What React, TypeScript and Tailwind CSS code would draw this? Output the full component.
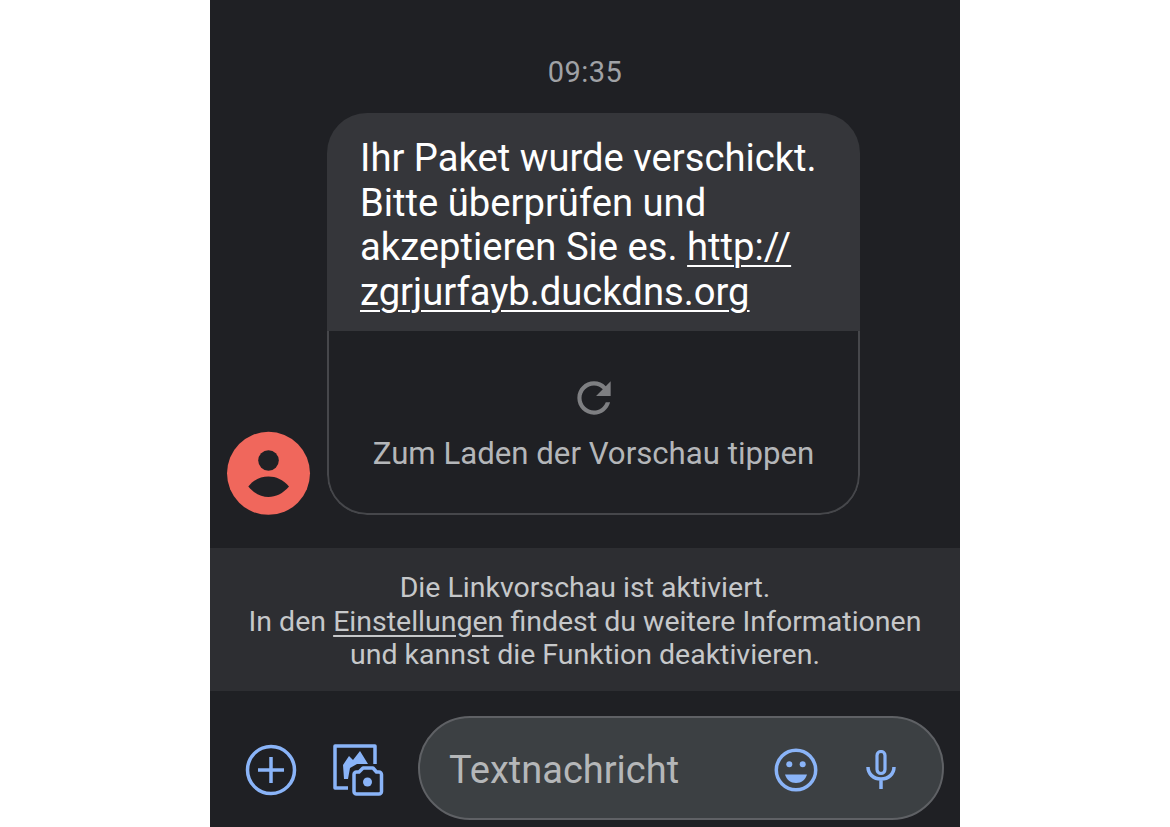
const BLUE = '#8ab4f8'

function PlusIcon() {
  return (
    <svg width="52" height="52" viewBox="0 0 52 52" fill="none" stroke={BLUE} strokeWidth="3.500">
      <circle cx="26" cy="26" r="23.500" />
      <path d="M26 13v26M13 26h26" />
    </svg>
  )
}

function GalleryIcon() {
  return (
    <svg width="52" height="52" viewBox="0 0 52 52" fill="none">
      <path d="M15 44H2V2h40v18" stroke={BLUE} strokeWidth="3.500" strokeLinejoin="round" />
      <path d="M11 35l-1-14 6-9 4 4 7-9 8 13H24l-7 4-2 11z" fill={BLUE} />
      <path d="M21 30.500a2.500 2.500 0 0 1 2.500-2.500H26l4-4h10l3.500 4H46a2.500 2.500 0 0 1 2.500 2.500V47.500a2.500 2.500 0 0 1-2.500 2.500H23.500a2.500 2.500 0 0 1-2.500-2.500z" stroke={BLUE} strokeWidth="3.500" strokeLinejoin="round" />
      <circle cx="34.500" cy="38" r="4.500" fill={BLUE} />
    </svg>
  )
}

function SmileIcon() {
  return (
    <svg width="44" height="44" viewBox="0 0 44 44" fill="none">
      <circle cx="22" cy="22" r="19.700" stroke={BLUE} strokeWidth="3.500" />
      <circle cx="15.300" cy="16.300" r="3" fill={BLUE} />
      <circle cx="28.700" cy="16.300" r="3" fill={BLUE} />
      <path d="M11 26.500h22c-1.500 5-5.500 8.500-11 8.500s-9.500-3.500-11-8.500z" fill={BLUE} />
    </svg>
  )
}

function MicIcon() {
  return (
    <svg width="30" height="40" viewBox="0 0 30 40" fill="none">
      <rect x="11" y="1.500" width="8" height="22" rx="4" stroke={BLUE} strokeWidth="3.200" />
      <path d="M2 17c0 7 5.500 12 13 12s13-5 13-12M15 29v10" stroke={BLUE} strokeWidth="3.500" />
    </svg>
  )
}

function RefreshIcon() {
  return (
    <svg width="50" height="50" viewBox="0 0 24 24" fill="#7e7f82">
      <path d="M17.650 6.350C16.200 4.900 14.210 4 12 4c-4.420 0-7.990 3.580-7.990 8s3.570 8 7.990 8c3.730 0 6.840-2.550 7.730-6h-2.080c-.82 2.330-3.040 4-5.650 4-3.310 0-6-2.690-6-6s2.690-6 6-6c1.660 0 3.140.69 4.220 1.780L13 11h7V4l-2.350 2.350z" />
    </svg>
  )
}

function Avatar() {
  return (
    <svg width="84" height="84" viewBox="0 0 84 84">
      <circle cx="41.500" cy="42.300" r="41.500" fill="#f0675c" />
      <circle cx="41.500" cy="29.500" r="10.300" fill="#202125" />
      <path d="M21.300 55.500C27 48.500 34 45.500 41.500 45.500S56 48.500 62 55.500C56 62.500 48.500 66 41.500 66S27 62.500 21.300 55.500z" fill="#202125" />
    </svg>
  )
}

export default function App() {
  return (
    <div className="min-h-screen bg-white flex justify-center font-['Roboto',sans-serif]">
      <div className="w-[750px] h-[827px] bg-[#1f2024] overflow-hidden flex flex-col">
        {/* Time */}
        <div className="pt-[56px] text-center text-[29px] leading-[32px] tracking-[0.5px] text-[#a0a2a6]">09:35</div>

        {/* Message */}
        <div className="mt-[25px] pl-[17px] flex items-end gap-[17px]">
          <Avatar />
          <div className="w-[533px] h-[402px] rounded-[40px] overflow-hidden flex flex-col -ml-px">
            <div className="h-[218px] bg-[#35363a] pl-[33px] pt-[23px] text-[38.200px] leading-[44.500px] text-white whitespace-nowrap">
              <div>Ihr Paket wurde verschickt.</div>
              <div>Bitte überprüfen und</div>
              <div>
                akzeptieren Sie es. <span className="underline underline-offset-[5px] decoration-2">http://</span>
              </div>
              <div className="underline underline-offset-[5px] decoration-2">zgrjurfayb.duckdns.org</div>
            </div>
            <div className="flex-1 flex flex-col items-center pt-[42px] border-x-2 border-b-2 border-[#46474b] rounded-b-[40px]">
              <RefreshIcon />
              <div className="mt-[13px] text-[31.200px] leading-[36px] text-[#b4b6b9] whitespace-nowrap">Zum Laden der Vorschau tippen</div>
            </div>
          </div>
        </div>

        {/* Link preview notice */}
        <div className="mt-[33px] h-[143px] pt-[4px] bg-[#2d2e32] flex flex-col items-center justify-center text-[28.500px] leading-[33.500px] text-[#c6c8ca]">
          <div>Die Linkvorschau ist aktiviert.</div>
          <div>
            In den <span className="underline underline-offset-[4px]">Einstellungen</span> findest du weitere Informationen
          </div>
          <div>und kannst die Funktion deaktivieren.</div>
        </div>

        {/* Composer */}
        <div className="mt-[25px] pl-[35px] flex items-center">
          <div className="pt-[4px]">
            <PlusIcon />
          </div>
          <div className="ml-[36px] pt-[4px]">
            <GalleryIcon />
          </div>
          <div className="ml-[33px] w-[526px] h-[104px] rounded-[52px] bg-[#3c4043] border-2 border-[#5f6165] flex items-center pl-[29px] pt-[4px]">
            <span className="w-[325px] text-[38px] text-[#b5b7b9]">Textnachricht</span>
            <SmileIcon />
            <div className="ml-[48px]">
              <MicIcon />
            </div>
          </div>
        </div>
      </div>
    </div>
  )
}
